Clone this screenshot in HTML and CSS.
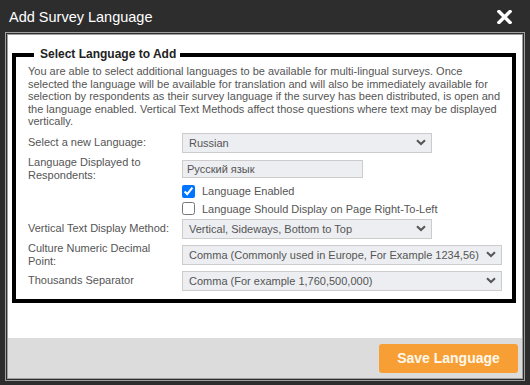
FILE: index.html
```html
<!DOCTYPE html>
<html lang="en">
<head>
  <meta charset="UTF-8" />
  <title>Add Survey Language</title>
  <link rel="stylesheet" href="styles.css">
</head>
<body>

  <div class="dialog">
    <div class="titlebar">
      <span class="title">Add Survey Language</span>
      <span class="close">
        <svg width="15" height="14" viewBox="0 0 15 14"><path d="M2 1.5 L13 12.5 M13 1.5 L2 12.5" stroke="#fff" stroke-width="3.4" stroke-linecap="square"/></svg>
      </span>
    </div>

    <div class="panel">
      <div class="panel-body">
        <fieldset class="group">
          <legend>Select Language to Add</legend>
          <p class="intro">You are able to select additional languages to be available for multi-lingual surveys. Once selected the language will be available for translation and will also be immediately available for selection by respondents as their survey language if the survey has been distributed, is open and the language enabled. Vertical Text Methods affect those questions where text may be displayed vertically.</p>

          <div class="form">
            <label class="lbl">Select a new Language:</label>
            <div class="select w-md"><span>Russian</span><svg class="chev" width="10" height="7" viewBox="0 0 10 7"><path d="M1 1.2 L5 5 L9 1.2" fill="none" stroke="#555" stroke-width="2"/></svg></div>

            <label class="lbl lbl-wrap">Language Displayed to Respondents:</label>
            <div class="textbox">Русский язык</div>

            <label class="check"><input type="checkbox" checked> Language Enabled</label>
            <label class="check"><input type="checkbox"> Language Should Display on Page Right-To-Left</label>

            <label class="lbl">Vertical Text Display Method:</label>
            <div class="select w-md"><span>Vertical, Sideways, Bottom to Top</span><svg class="chev" width="10" height="7" viewBox="0 0 10 7"><path d="M1 1.2 L5 5 L9 1.2" fill="none" stroke="#555" stroke-width="2"/></svg></div>

            <label class="lbl lbl-wrap">Culture Numeric Decimal Point:</label>
            <div class="select w-lg"><span>Comma (Commonly used in Europe, For Example 1234,56)</span><svg class="chev" width="10" height="7" viewBox="0 0 10 7"><path d="M1 1.2 L5 5 L9 1.2" fill="none" stroke="#555" stroke-width="2"/></svg></div>

            <label class="lbl">Thousands Separator</label>
            <div class="select w-lg"><span>Comma (For example 1,760,500,000)</span><svg class="chev" width="10" height="7" viewBox="0 0 10 7"><path d="M1 1.2 L5 5 L9 1.2" fill="none" stroke="#555" stroke-width="2"/></svg></div>
          </div>
        </fieldset>
      </div>

      <div class="footer">
        <button type="button" class="save">Save Language</button>
      </div>
    </div>
  </div>

</body>
</html>
```

FILE: styles.css
```css
* { box-sizing: border-box; }
body {
  margin: 0;
  font-family: 'Liberation Sans', Arial, sans-serif;
}
.dialog {
  width: 530px;
  height: 385px;
  background: #2d2d2d;
  padding: 0 5px 4px;
  display: flex;
  flex-direction: column;
}
.titlebar {
  height: 32px;
  display: flex;
  align-items: center;
  justify-content: space-between;
  padding: 0 13px 0 4px;
}
.title {
  color: #fff;
  font-size: 14.5px;
  margin-top: 1px;
}
.close {
  display: flex;
  margin-top: 2px;
}
.panel {
  flex: 1;
  display: flex;
  flex-direction: column;
  border: 3px double #a0a0a0;
  background: #fff;
  background-clip: padding-box;
}
.panel-body {
  flex: 1;
  padding-top: 1px;
}
.group {
  margin: 11px 6px 0 4px;
  border: 4px solid #000;
  padding: 3px 11px 8px 12px;
  min-width: 0;
}
.group legend {
  font-size: 12px;
  font-weight: bold;
  color: #222;
  margin-left: 6px;
  padding: 0 4px 0 6px;
  line-height: 15px;
}
.intro {
  margin: 0;
  font-size: 11px;
  line-height: 12.5px;
  color: #555;
}
.form {
  margin-top: 5px;
  display: grid;
  grid-template-columns: 154px 1fr;
  row-gap: 3.5px;
  align-items: center;
  font-size: 11px;
  color: #555;
}
.lbl {
  line-height: 12.5px;
  white-space: nowrap;
}
.lbl-wrap {
  white-space: normal;
  padding-right: 20px;
}
.select {
  height: 20px;
  border: 1px solid #ccc;
  background: #eceef1;
  display: flex;
  align-items: center;
  justify-content: space-between;
  padding: 0 5px 0 6px;
  color: #555;
}
.w-md { width: 250px; }
.w-lg { width: 320px; }
.textbox {
  width: 181px;
  height: 18px;
  border: 1px solid #ccc;
  background: #eceef1;
  padding: 1px 4px 0;
  line-height: 14px;
  color: #555;
}
.check {
  grid-column: 2;
  display: flex;
  align-items: center;
  gap: 7px;
  height: 13px;
}
.check + .check {
  margin-top: 1px;
}
.check input {
  margin: 0;
  width: 13px;
  height: 13px;
}
.footer {
  height: 40px;
  background: #dcdcdc;
  display: flex;
  justify-content: flex-end;
  align-items: center;
  padding-right: 4px;
}
.save {
  background-color: #f79f34;
  color: #fff8ec;
  border: none;
  border-radius: 3px;
  width: 139px;
  height: 29px;
  font-family: 'Liberation Sans', Arial, sans-serif;
  font-size: 14px;
  font-weight: bold;
  cursor: pointer;
}
```
